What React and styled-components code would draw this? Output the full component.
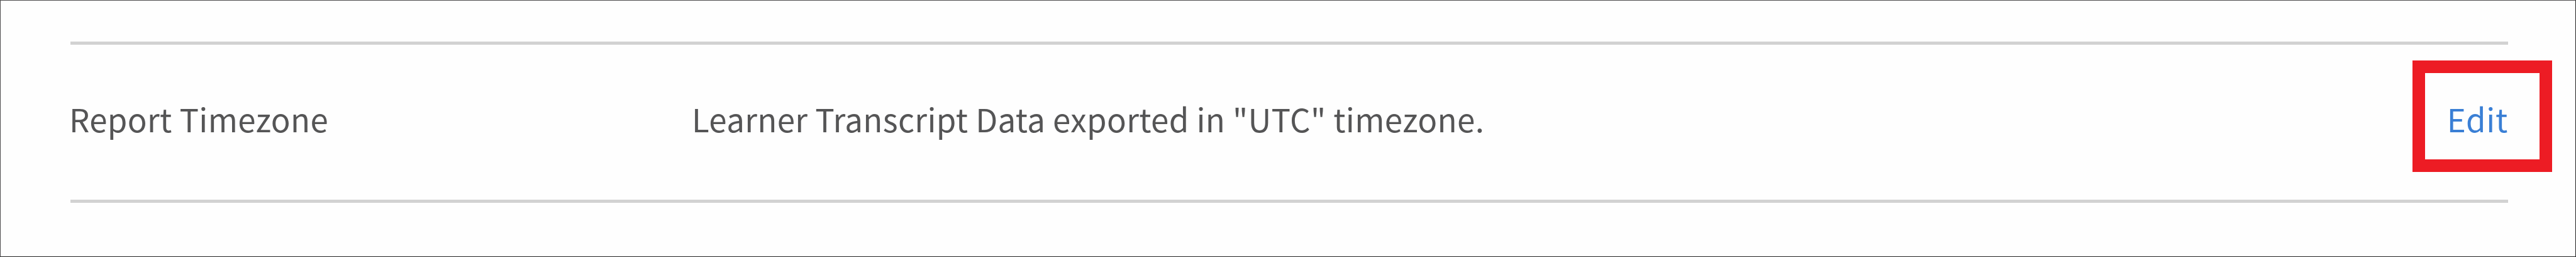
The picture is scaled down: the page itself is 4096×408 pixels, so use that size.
import React from 'react';
import styled, { createGlobalStyle } from 'styled-components';

const GlobalStyle = createGlobalStyle`
  * { box-sizing: border-box; }
  body { margin: 0; background: #fefefe; overflow: hidden; }
`;

const Panel = styled.main`
  width: 4096px;
  height: 408px;
  padding: 65px 107px 0 111px;
  background: #fefefe;
  border: 1px solid #4d4b4d;
  border-right-color: #222;
  border-bottom-color: #222;
  font-family: 'Noto Sans CJK SC', 'Noto Sans', sans-serif;
`;

const SettingRow = styled.section`
  display: grid;
  grid-template-columns: 988px 1fr auto;
  align-items: center;
  height: 256px;
  border-top: 5px solid #d2d2d2;
  border-bottom: 5px solid #d2d2d2;
  font-size: 51px;
  line-height: 74px;
  color: #555556;
  white-space: nowrap;
`;

const Value = styled.span`
  padding-bottom: 12px;
  letter-spacing: 0.34px;
`;

const Label = styled(Value)`
  margin-left: -2px;
`;

const Highlight = styled.div`
  display: flex;
  align-items: center;
  justify-content: flex-end;
  width: 222px;
  height: 177px;
  margin: -20px -70px 0 0;
  padding: 8px 50px 0 0;
  border: 20px solid #ed1c24;
`;

const EditLink = styled.a`
  color: #3a7fd5;
  letter-spacing: 0.7px;
  text-decoration: none;
`;

export default function App() {
  return (
    <>
      <GlobalStyle />
      <Panel>
        <SettingRow>
          <Label>Report Timezone</Label>
          <Value>Learner Transcript Data exported in "UTC" timezone.</Value>
          <Highlight>
            <EditLink>Edit</EditLink>
          </Highlight>
        </SettingRow>
      </Panel>
    </>
  );
}
